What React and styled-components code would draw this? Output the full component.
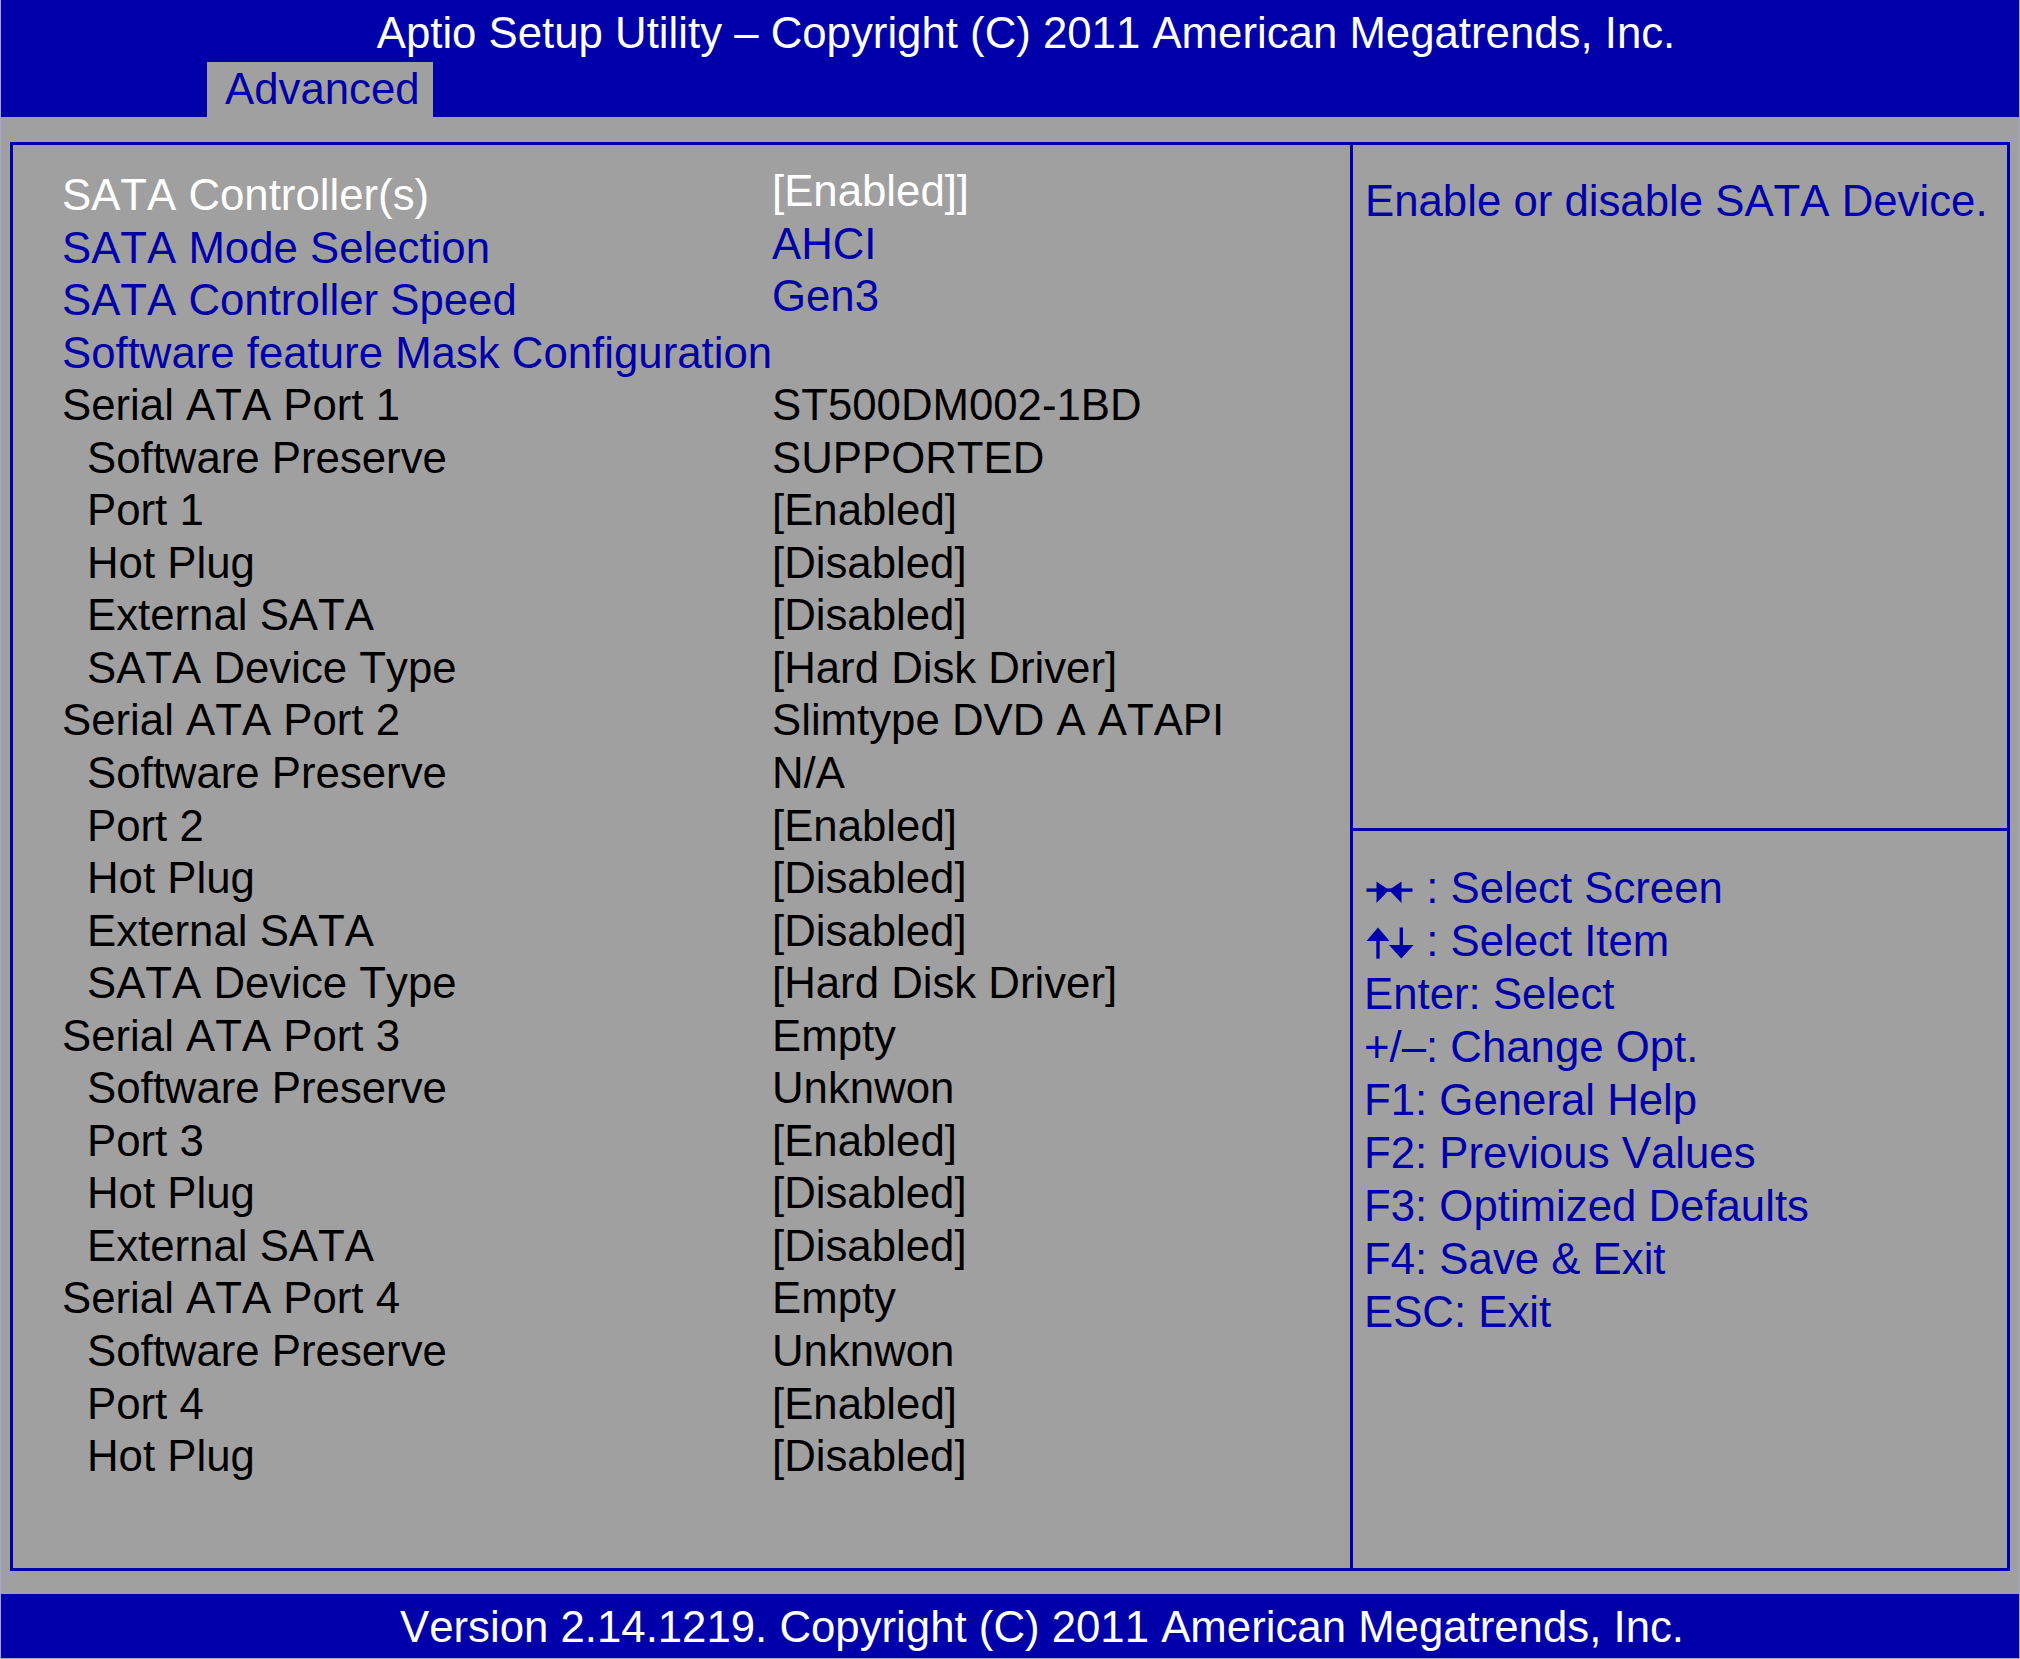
import styled, { createGlobalStyle } from 'styled-components'

const BLUE = '#0000aa'
const GREY = '#a0a0a0'

const rows = [
	{ label: 'SATA Controller(s)', value: '[Enabled]]', tone: 'white', lift: true },
	{ label: 'SATA Mode Selection', value: 'AHCI', tone: 'blue', lift: true },
	{ label: 'SATA Controller Speed', value: 'Gen3', tone: 'blue', lift: true },
	{ label: 'Software feature Mask Configuration', tone: 'blue' },
	{ label: 'Serial ATA Port 1', value: 'ST500DM002-1BD' },
	{ label: 'Software Preserve', value: 'SUPPORTED', sub: true },
	{ label: 'Port 1', value: '[Enabled]', sub: true },
	{ label: 'Hot Plug', value: '[Disabled]', sub: true },
	{ label: 'External SATA', value: '[Disabled]', sub: true },
	{ label: 'SATA Device Type', value: '[Hard Disk Driver]', sub: true },
	{ label: 'Serial ATA Port 2', value: 'Slimtype DVD A ATAPI' },
	{ label: 'Software Preserve', value: 'N/A', sub: true },
	{ label: 'Port 2', value: '[Enabled]', sub: true },
	{ label: 'Hot Plug', value: '[Disabled]', sub: true },
	{ label: 'External SATA', value: '[Disabled]', sub: true },
	{ label: 'SATA Device Type', value: '[Hard Disk Driver]', sub: true },
	{ label: 'Serial ATA Port 3', value: 'Empty' },
	{ label: 'Software Preserve', value: 'Unknwon', sub: true },
	{ label: 'Port 3', value: '[Enabled]', sub: true },
	{ label: 'Hot Plug', value: '[Disabled]', sub: true },
	{ label: 'External SATA', value: '[Disabled]', sub: true },
	{ label: 'Serial ATA Port 4', value: 'Empty' },
	{ label: 'Software Preserve', value: 'Unknwon', sub: true },
	{ label: 'Port 4', value: '[Enabled]', sub: true },
	{ label: 'Hot Plug', value: '[Disabled]', sub: true },
]

const keys = [
	{ icon: 'lr', text: ' : Select Screen' },
	{ icon: 'ud', text: ' : Select Item' },
	{ text: 'Enter: Select' },
	{ text: '+/\u2013: Change Opt.' },
	{ text: 'F1: General Help' },
	{ text: 'F2: Previous Values' },
	{ text: 'F3: Optimized Defaults' },
	{ text: 'F4: Save & Exit' },
	{ text: 'ESC: Exit' },
]

const toneColor = tone => (tone === 'white' ? '#ffffff' : tone === 'blue' ? BLUE : '#000000')

const LeftRight = () => (
	<KeyIcon viewBox="0 0 50 34">
		<rect x="2.5" y="15.4" width="46" height="3.4" fill={BLUE} />
		<polygon points="12.5,8.5 25,17.1 12.5,30" fill={BLUE} />
		<polygon points="37.5,8.5 25,17.1 37.5,30" fill={BLUE} />
	</KeyIcon>
)

const UpDown = () => (
	<KeyIcon viewBox="0 0 50 34">
		<polygon points="2.5,15 14,1.5 25.5,15" fill={BLUE} />
		<rect x="12.3" y="14" width="3.4" height="18.7" fill={BLUE} />
		<rect x="35.6" y="1.5" width="3.4" height="18.5" fill={BLUE} />
		<polygon points="25,19 37.3,32.5 49.6,19" fill={BLUE} />
	</KeyIcon>
)

export default function App() {
	return (
		<>
			<GlobalStyle />
			<Screen>
				<Header>
					<Title>Aptio Setup Utility – Copyright (C) 2011 American Megatrends, Inc.</Title>
					<TabBar>
						<Tab>Advanced</Tab>
					</TabBar>
				</Header>
				<Body>
					<Panel>
						<Settings>
							{rows.map((row, i) => (
								<Row key={i}>
									<Label $tone={row.tone} $sub={row.sub}>
										{row.label}
									</Label>
									<Value $tone={row.tone} $lift={row.lift}>
										{row.value}
									</Value>
								</Row>
							))}
						</Settings>
						<Side>
							<Help>Enable or disable SATA Device.</Help>
							<Keys>
								{keys.map((k, i) => (
									<KeyLine key={i}>
										{k.icon === 'lr' && <LeftRight />}
										{k.icon === 'ud' && <UpDown />}
										{k.text}
									</KeyLine>
								))}
							</Keys>
						</Side>
					</Panel>
				</Body>
				<Footer>Version 2.14.1219. Copyright (C) 2011 American Megatrends, Inc.</Footer>
			</Screen>
		</>
	)
}

const GlobalStyle = createGlobalStyle`
	html, body {
		margin: 0;
		padding: 0;
		background: ${GREY};
	}
	body {
		font-family: "Liberation Sans", Arial, sans-serif;
		font-kerning: none;
		font-feature-settings: "kern" 0;
	}
`

const Screen = styled.div`
	width: 2020px;
	height: 1659px;
	box-sizing: border-box;
	display: flex;
	flex-direction: column;
	background: ${GREY};
	border-left: 1px solid #a4a4d4;
	border-right: 1px solid #a4a4d4;
	border-bottom: 1px solid #a4a4d4;
	font-size: 43.75px;
	overflow: hidden;
`

const Header = styled.header`
	height: 117px;
	background: ${BLUE};
	display: flex;
	flex-direction: column;
	flex-shrink: 0;
`

const Title = styled.div`
	height: 62px;
	line-height: 62px;
	padding-top: 2px;
	box-sizing: border-box;
	text-align: center;
	padding-left: 32px;
	color: #ffffff;
	white-space: nowrap;
`

const TabBar = styled.div`
	display: flex;
	flex: 1;
	padding-left: 206px;
`

const Tab = styled.div`
	width: 226px;
	box-sizing: border-box;
	padding: 1px 0 2px 18px;
	line-height: 52px;
	background: ${GREY};
	color: ${BLUE};
`

const Body = styled.main`
	flex: 1;
	display: flex;
	padding: 25px 9px 23px 9px;
	min-height: 0;
`

const Panel = styled.section`
	flex: 1;
	display: grid;
	grid-template-columns: 1337px 1fr;
	border: 3px solid ${BLUE};
`

const Settings = styled.div`
	padding: 24px 0 0 49px;
`

const Row = styled.div`
	display: grid;
	grid-template-columns: 710px 1fr;
	height: 52.55px;
	line-height: 52.55px;
	white-space: nowrap;
`

const Label = styled.div`
	color: ${p => toneColor(p.$tone)};
	padding-left: ${p => (p.$sub ? '25px' : '0')};
`

const Value = styled.div`
	color: ${p => toneColor(p.$tone)};
	transform: translateY(${p => (p.$lift ? '-4px' : '0')});
`

const Side = styled.aside`
	display: flex;
	flex-direction: column;
	border-left: 3px solid ${BLUE};
`

const Help = styled.div`
	height: 683px;
	box-sizing: border-box;
	padding: 30px 0 0 12px;
	line-height: 52.4px;
	color: ${BLUE};
	white-space: nowrap;
`

const Keys = styled.div`
	flex: 1;
	border-top: 3px solid ${BLUE};
	padding: 30px 0 0 11px;
`

const KeyLine = styled.div`
	height: 53px;
	line-height: 53px;
	color: ${BLUE};
	white-space: pre;
`

const KeyIcon = styled.svg`
	width: 50px;
	height: 34px;
	vertical-align: -4px;
`

const Footer = styled.footer`
	height: 64px;
	flex-shrink: 0;
	padding-top: 2px;
	box-sizing: border-box;
	background: ${BLUE};
	color: #ffffff;
	text-align: center;
	line-height: 62px;
	padding-left: 64px;
	white-space: nowrap;
`
